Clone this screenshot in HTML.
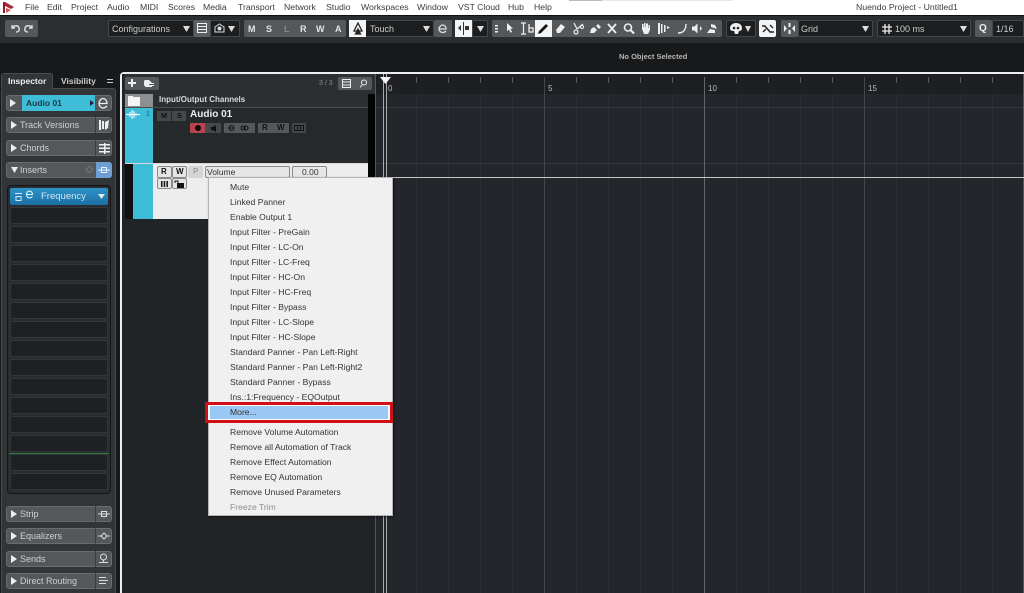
<!DOCTYPE html>
<html><head><meta charset="utf-8"><style>
html,body{margin:0;padding:0;background:#212427}
#r{position:relative;width:1024px;height:593px;overflow:hidden;background:#212427;font-family:"Liberation Sans",sans-serif;font-size:9px;color:#ccc}
#r div,#r svg{position:absolute}
.t{white-space:nowrap;line-height:12px}
.b{background:#55585b;border-radius:2px}
.g{background:#1c1e20;border:1px solid #45484b;border-radius:2px;box-sizing:border-box}
.p{background:#55585b;border:1px solid #6a6d70;border-radius:3px;box-sizing:border-box;left:6px;width:106px;height:16px}
.s{background:#1e2023;border:1px solid #34373a;border-radius:2px;box-sizing:border-box;left:10px;width:98px;height:17px}
.mi{left:230px;color:#333;white-space:nowrap;line-height:12px;font-size:8.6px}
.m{top:1px;color:#3c3c3c;white-space:nowrap;line-height:12px;font-size:8.7px}
.lb{background:#e6e6e6;border:1px solid #8a8a8a;border-radius:2px;box-sizing:border-box}
.sep{left:95px;width:1px;height:16px;background:#3a3d40}
</style></head><body><div id="r">

<div style="left:0;top:0;width:1024px;height:15px;background:#fff"></div>
<svg style="left:2px;top:1px" width="14" height="13" viewBox="0 0 14 13"><path d="M1 1h2v11H1z" fill="#8c1c2c"/><path d="M3 1l9 5-3 2-6-3z" fill="#a52a3a"/><path d="M4 7l5 2-5 3z" fill="#c55"/></svg>
<div class="m" style="left:25px">File</div><div class="m" style="left:47px">Edit</div><div class="m" style="left:71px">Project</div><div class="m" style="left:107px">Audio</div><div class="m" style="left:140px">MIDI</div><div class="m" style="left:168px">Scores</div><div class="m" style="left:203px">Media</div><div class="m" style="left:238px">Transport</div><div class="m" style="left:284px">Network</div><div class="m" style="left:326px">Studio</div><div class="m" style="left:361px">Workspaces</div><div class="m" style="left:417px">Window</div><div class="m" style="left:458px">VST Cloud</div><div class="m" style="left:508px">Hub</div><div class="m" style="left:534px">Help</div>
<div class="m" style="left:856px">Nuendo Project - Untitled1</div>
<div style="left:569px;top:0;width:33px;height:1px;background:#bbb"></div>
<div style="left:602px;top:0;width:131px;height:1px;background:#e8e8e8"></div>

<!-- toolbar -->
<div style="left:0;top:15px;width:1024px;height:1px;background:#111"></div>
<div style="left:0;top:16px;width:1024px;height:27px;background:#2b2e31"></div>
<div style="left:0;top:43px;width:1024px;height:50px;background:#17191b"></div>
<div class="t" style="left:619px;top:51px;font-size:7.5px;color:#b5b5b5;font-weight:bold">No Object Selected</div>

<div class="b" style="left:5px;top:20px;width:33px;height:17px"></div>
<svg style="left:8px;top:22px" width="28" height="13" viewBox="0 0 28 13" fill="none" stroke="#ddd" stroke-width="1.4"><path d="M4 3v3h3M4 6c2-3 6-3 7 0s-1 4-3 4"/><path d="M24 3v3h-3M24 6c-2-3-6-3-7 0s1 4 3 4"/></svg>

<div class="g" style="left:108px;top:20px;width:86px;height:17px"></div>
<div class="t" style="left:112px;top:23px;color:#ccc;font-size:9px">Configurations</div>
<svg style="left:183px;top:26px" width="7" height="6"><path d="M0 0h7L3.5 6z" fill="#ddd"/></svg>
<div style="left:194px;top:20px;width:16px;height:17px;background:#5c5f62"></div>
<svg style="left:197px;top:23px" width="10" height="10" fill="none" stroke="#eee"><rect x=".5" y=".5" width="9" height="9"/><path d="M1 3.5h8M1 6.500h8"/></svg>
<div class="g" style="left:210px;top:20px;width:30px;height:17px"></div>
<svg style="left:214px;top:23px" width="11" height="10" fill="none" stroke="#ddd"><path d="M1 4l4.500-3 4.500 3v5H1z"/><circle cx="5.500" cy="5.500" r="1.500" fill="#ddd"/></svg>
<svg style="left:228px;top:26px" width="7" height="6"><path d="M0 0h7L3.500 6z" fill="#ddd"/></svg>

<div class="b" style="left:244px;top:20px;width:102px;height:17px"></div>
<div class="t" style="left:248px;top:23px;font-weight:bold;color:#e4e4e4">M</div>
<div class="t" style="left:266px;top:23px;font-weight:bold;color:#e4e4e4">S</div>
<div class="t" style="left:284px;top:23px;font-weight:bold;color:#85888a">L</div>
<div class="t" style="left:300px;top:23px;font-weight:bold;color:#e4e4e4">R</div>
<div class="t" style="left:316px;top:23px;font-weight:bold;color:#e4e4e4">W</div>
<div class="t" style="left:335px;top:23px;font-weight:bold;color:#e4e4e4">A</div>

<div class="g" style="left:349px;top:20px;width:85px;height:17px"></div>
<div style="left:349px;top:20px;width:17px;height:17px;background:#f4f4f4"></div>
<svg style="left:352px;top:22px" width="12" height="13" fill="none" stroke="#222" stroke-width="1.300"><path d="M6 1l4 8H2z"/><path d="M6 7l2.500 5h-5z" fill="#222"/></svg>
<div class="t" style="left:370px;top:23px">Touch</div>
<svg style="left:423px;top:26px" width="7" height="6"><path d="M0 0h7L3.500 6z" fill="#ddd"/></svg>
<div class="b" style="left:434px;top:20px;width:18px;height:17px"></div>
<svg style="left:437px;top:23px" width="11" height="11" fill="none" stroke="#ddd" stroke-width="1.300"><path d="M2 6h7c0-3-2-4-3.500-4S2 4 2 6s2 3.500 3.500 3.500S8 9 9 8"/></svg>
<div style="left:455px;top:20px;width:17px;height:17px;background:#f4f4f4"></div>
<svg style="left:457px;top:22px" width="14" height="13"><path d="M6 0h1v13H6zM1 6l3-3v6zM8 4h4v4H8z" fill="#333"/></svg>
<div class="g" style="left:472px;top:20px;width:16px;height:17px"></div>
<svg style="left:477px;top:26px" width="7" height="6"><path d="M0 0h7L3.500 6z" fill="#ddd"/></svg>

<!-- tool group -->
<div class="b" style="left:492px;top:20px;width:230px;height:17px"></div>
<div style="left:535px;top:20px;width:17px;height:17px;background:#f4f4f4"></div>
<svg style="left:492px;top:20px" width="230" height="17" fill="#eee">
<path d="M3 5h3v1.500H3zM3 8h3v1.500H3zM3 11h3v1.500H3z"/>
<path d="M15 3l6 5.500-2.500.3 1.500 3.200-1.500.7-1.500-3.200-2 1.800z"/>
<path d="M29 3h5M31.500 3v11M29 14h5" stroke="#eee" stroke-width="1.200" fill="none"/><path d="M37 4v8h4V8h-4" stroke="#eee" stroke-width="1.300" fill="none"/>
<path d="M46 14l1-3 7-7 2 2-7 7z" fill="#111"/>
<path d="M64 10l5-6 4 3-5 6h-3z"/>
<path d="M82 3l3 6M91 4l-6 5" stroke="#eee" stroke-width="1.200" fill="none"/><circle cx="84" cy="12" r="2" fill="none" stroke="#eee" stroke-width="1.200"/><circle cx="90" cy="7" r="1.500" fill="none" stroke="#eee"/>
<path d="M98 13l1-4 3-2 3 3-3 3zM104 6l2-2 3 3-2 2z"/>
<path d="M116 4l8 9M124 4l-8 9" stroke="#eee" stroke-width="1.800" fill="none"/>
<circle cx="136" cy="7.500" r="3.500" fill="none" stroke="#eee" stroke-width="1.600"/><path d="M138.500 10l3.500 3.500" stroke="#eee" stroke-width="2"/>
<path d="M150 9V4h1.500v3h.5V3h1.500v4h.5V3.500H156V8h.5V5h1.500v5l-2 4h-4z"/>
<path d="M166 3h2v11h-2zM169 4h1.500v9H169zM172 5h1.500v7H172zM175 6l3 1.500-3 1.500z"/>
<path d="M194 4c0 6-3 9-8 9" fill="none" stroke="#eee" stroke-width="1.400"/>
<path d="M200 6.500h2.500l3-3v10l-3-3H200zM208 6l2 2.500-2 2.500z"/>
<path d="M215 13l3-4 5 1v3zM219 4l4 1 2 4-3-1-3-1z"/>
</svg>

<div class="g" style="left:726px;top:20px;width:30px;height:17px"></div>
<svg style="left:729px;top:22px" width="14" height="14"><path d="M7 1c3.500 0 6 2 6 5 0 2-1 3-3 3l-1 3H6L5 9C2 9 1 8 1 6c0-3 3-5 6-5z" fill="#eee"/><circle cx="5" cy="6" r="1.300" fill="#222"/><circle cx="9" cy="6" r="1.300" fill="#222"/></svg>
<svg style="left:745px;top:26px" width="7" height="6"><path d="M0 0h6L3 6z" fill="#ddd"/></svg>
<div style="left:759px;top:20px;width:17px;height:17px;background:#f4f4f4;border-radius:2px"></div>
<svg style="left:761px;top:22px" width="14" height="13" fill="none" stroke="#222" stroke-width="1.400"><path d="M1 4h3l5 6h4"/><path d="M2 10l3-3M9 3l3 3"/></svg>
<div class="b" style="left:781px;top:20px;width:17px;height:17px"></div>
<svg style="left:783px;top:22px" width="13" height="13" fill="#eee"><path d="M5.500 1h2v4h-2zM5.500 8h2v4h-2zM1 3l3 3.500-3 3.500zM12 3L9 6.500l3 3.500z"/></svg>
<div class="g" style="left:798px;top:20px;width:75px;height:17px"></div>
<div class="t" style="left:801px;top:23px">Grid</div>
<svg style="left:862px;top:26px" width="7" height="6"><path d="M0 0h7L3.500 6z" fill="#ddd"/></svg>
<div class="g" style="left:877px;top:20px;width:94px;height:17px"></div>
<svg style="left:882px;top:24px" width="10" height="10" stroke="#eee" stroke-width="1.300"><path d="M3 0v10M7 0v10M0 3h10M0 7h10"/></svg>
<div class="t" style="left:895px;top:23px">100 ms</div>
<svg style="left:960px;top:26px" width="7" height="6"><path d="M0 0h7L3.500 6z" fill="#ddd"/></svg>
<div class="b" style="left:975px;top:20px;width:17px;height:17px"></div>
<div class="t" style="left:979px;top:23px;font-weight:bold;color:#eee;font-size:10px">Q</div>
<div class="g" style="left:992px;top:20px;width:32px;height:17px"></div>
<div class="t" style="left:996px;top:23px">1/16</div>

<!-- inspector panel -->
<div style="left:0;top:72px;width:121px;height:521px;background:#17191b"></div>
<div style="left:1px;top:88px;width:115px;height:505px;background:#323538;border:1px solid #4a4d50;border-bottom:none;border-radius:3px 3px 0 0;box-sizing:border-box"></div>
<div style="left:1px;top:73px;width:52px;height:16px;background:#323538;border-radius:3px 3px 0 0;border:1px solid #4a4d50;border-bottom:none;box-sizing:border-box"></div>
<div class="t" style="left:8px;top:75px;font-weight:bold;color:#eee;font-size:8.500px">Inspector</div>
<div class="t" style="left:61px;top:75px;font-weight:bold;color:#ccc;font-size:8.500px">Visibility</div>
<div style="left:107px;top:79px;width:6px;height:1px;background:#ccc"></div>
<div style="left:107px;top:82px;width:6px;height:1px;background:#ccc"></div>

<div class="p" style="top:95px"></div>
<div style="left:22px;top:95px;width:73px;height:16px;background:#3fbcd8"></div>
<svg style="left:10px;top:99px" width="6" height="8"><path d="M0 0l6 4-6 4z" fill="#eee"/></svg>
<div class="t" style="left:26px;top:97px;font-weight:bold;color:#1c3844;font-size:8.500px">Audio 01</div>
<svg style="left:90px;top:100px" width="4" height="6"><path d="M0 0l4 3-4 3z" fill="#223"/></svg>
<svg style="left:97px;top:97px" width="12" height="12" fill="none" stroke="#eee" stroke-width="1.300"><path d="M2 6.500h8c0-3-2-5-4-5S2 4 2 6.500 4 11 6 11s3-1 4-2"/></svg>

<div class="p" style="top:117px"></div>
<svg style="left:11px;top:121px" width="6" height="8"><path d="M0 0l6 4-6 4z" fill="#eee"/></svg>
<div class="t" style="left:20px;top:119px;color:#d0d0d0">Track Versions</div>
<div class="sep" style="top:117px"></div>
<svg style="left:98px;top:119px" width="12" height="12" fill="#eee"><path d="M1 1h2v10H1zM4 2h2v8H4zM7 3l4-2-1 8-3 2z"/></svg>

<div class="p" style="top:140px"></div>
<svg style="left:11px;top:144px" width="6" height="8"><path d="M0 0l6 4-6 4z" fill="#eee"/></svg>
<div class="t" style="left:20px;top:142px;color:#d0d0d0">Chords</div>
<div class="sep" style="top:140px"></div>
<svg style="left:99px;top:143px" width="11" height="11" fill="#eee"><path d="M0 1h11v1.500H0zM0 4.500h11V6H0zM0 8h11v1.500H0zM5 0h1.500v11H5z"/></svg>

<div class="p" style="top:162px"></div>
<svg style="left:11px;top:167px" width="7" height="6"><path d="M0 0h7L3.500 6z" fill="#eee"/></svg>
<div class="t" style="left:20px;top:164px;color:#d0d0d0">Inserts</div>
<svg style="left:85px;top:165px" width="9" height="9" fill="none" stroke="#777"><path d="M4.500 1l3.500 3.500-3.500 3.500L1 4.500z"/></svg>
<div style="left:96px;top:162px;width:16px;height:16px;background:#6d9ed4;border-radius:0 3px 3px 0"></div>
<svg style="left:98px;top:165px" width="12" height="10" fill="none" stroke="#e8f0ff"><rect x="3.500" y="2.500" width="5" height="5"/><path d="M0 5h12"/></svg>

<div style="left:7px;top:185px;width:104px;height:309px;background:#2a2d30;border:1px solid #141618;border-radius:4px;box-sizing:border-box"></div>
<div style="left:10px;top:188px;width:98px;height:17px;background:linear-gradient(#2e93c8,#1d6fa3);border-radius:2px"></div>
<svg style="left:13px;top:191px" width="16" height="11" fill="none" stroke="#cfe7f5"><path d="M2 2.500h7M3 5.500h5v4H3z"/></svg>
<svg style="left:25px;top:190px" width="9" height="9" fill="none" stroke="#dff"><path d="M1.500 4.500h6c0-2-1.500-3.500-3-3.500S1.500 2.500 1.500 4.500 3 8 4.500 8 7 7 7.500 6.500"/></svg>
<div class="t" style="left:41px;top:191px;color:#cfe7f5;font-size:9.500px">Frequency</div>
<svg style="left:98px;top:194px" width="7" height="5"><path d="M0 0h7L3.500 5z" fill="#dbeaf5"/></svg>

<div class="s" style="top:207px"></div><div class="s" style="top:226px"></div><div class="s" style="top:245px"></div><div class="s" style="top:264px"></div><div class="s" style="top:283px"></div><div class="s" style="top:302px"></div><div class="s" style="top:321px"></div><div class="s" style="top:340px"></div><div class="s" style="top:359px"></div><div class="s" style="top:378px"></div><div class="s" style="top:397px"></div><div class="s" style="top:416px"></div><div class="s" style="top:435px"></div><div class="s" style="top:454px"></div><div class="s" style="top:473px"></div>
<div style="left:9px;top:453px;width:100px;height:1px;background:#2f7a38"></div>

<div class="p" style="top:506px"></div>
<svg style="left:11px;top:510px" width="6" height="8"><path d="M0 0l6 4-6 4z" fill="#eee"/></svg>
<div class="t" style="left:20px;top:508px;color:#d0d0d0">Strip</div>
<div class="sep" style="top:506px"></div>
<svg style="left:98px;top:509px" width="12" height="10" fill="none" stroke="#ddd"><rect x="3.500" y="2.500" width="5" height="5"/><path d="M0 5h12"/></svg>

<div class="p" style="top:528px"></div>
<svg style="left:11px;top:532px" width="6" height="8"><path d="M0 0l6 4-6 4z" fill="#eee"/></svg>
<div class="t" style="left:20px;top:530px;color:#d0d0d0">Equalizers</div>
<div class="sep" style="top:528px"></div>
<svg style="left:98px;top:531px" width="12" height="10" fill="none" stroke="#ddd"><path d="M6 2l3 3-3 3-3-3zM0 5h3M9 5h3"/></svg>

<div class="p" style="top:551px"></div>
<svg style="left:11px;top:555px" width="6" height="8"><path d="M0 0l6 4-6 4z" fill="#eee"/></svg>
<div class="t" style="left:20px;top:553px;color:#d0d0d0">Sends</div>
<div class="sep" style="top:551px"></div>
<svg style="left:98px;top:553px" width="11" height="11" fill="none" stroke="#ddd"><circle cx="5.500" cy="4" r="3"/><path d="M1 9.500h9M5.500 7v2"/></svg>

<div class="p" style="top:573px"></div>
<svg style="left:11px;top:577px" width="6" height="8"><path d="M0 0l6 4-6 4z" fill="#eee"/></svg>
<div class="t" style="left:20px;top:575px;color:#d0d0d0">Direct Routing</div>
<div class="sep" style="top:573px"></div>
<svg style="left:99px;top:576px" width="11" height="10" stroke="#ddd"><path d="M0 1.500h7M0 4.500h9M0 7.500h7"/></svg>

<!-- project frame -->
<div style="left:120px;top:72px;width:904px;height:521px;background:#212427;border-top:2px solid #eee;border-left:2px solid #eee;border-radius:4px 0 0 0;box-sizing:border-box"></div>

<!-- track list -->
<div style="left:122px;top:74px;width:2px;height:519px;background:#212427"></div>
<div style="left:124px;top:74px;width:251px;height:20px;background:#2c2f32"></div>
<div class="b" style="left:125px;top:77px;width:34px;height:13px"></div>
<svg style="left:128px;top:79px" width="28" height="9"><path d="M3 0h2v3h3v2H5v3H3V5H0V3h3z" fill="#eee"/><path d="M17 1h4l3 3h-3v3h3v1h-5c-2 0-3-1-3-3s0-4 1-4z" fill="#eee"/><path d="M21 4h5v1h-5zM21 6h5v1h-5z" fill="#eee"/></svg>
<div class="t" style="left:319px;top:78px;font-size:7px;color:#888">3 / 3</div>
<div class="b" style="left:338px;top:77px;width:34px;height:13px"></div>
<svg style="left:342px;top:79px" width="28" height="9" fill="none" stroke="#eee"><rect x=".5" y=".5" width="8" height="8"/><path d="M1 3h7M1 6h7"/><circle cx="22" cy="3.500" r="2.500"/><path d="M20 6l-2 2.500"/></svg>

<div style="left:125px;top:94px;width:28px;height:13px;background:#8d8f91"></div>
<svg style="left:128px;top:95px" width="12" height="11"><path d="M0 1h5v1h7v9H0z" fill="#f4f4f4"/></svg>
<div style="left:153px;top:94px;width:215px;height:13px;background:#2c2f32"></div>
<div class="t" style="left:159px;top:94px;font-weight:bold;color:#d8d8d8;font-size:8px">Input/Output Channels</div>
<div style="left:368px;top:94px;width:7px;height:125px;background:#050505"></div>

<div style="left:125px;top:107px;width:28px;height:56px;background:#3fbcd8"></div>
<div style="left:153px;top:107px;width:215px;height:56px;background:#26292c"></div>
<div style="left:125px;top:107px;width:243px;height:1px;background:#4a4d50"></div>
<svg style="left:126px;top:109px" width="14" height="11" stroke="#fff"><path d="M0 5.500h14M4 3v5M6 1v9M8 2v7M10 4v3"/></svg>
<div class="t" style="left:146px;top:109px;font-size:7px;color:#1a5c70">1</div>
<div style="left:157px;top:111px;width:14px;height:10px;background:#45484a"></div>
<div style="left:172px;top:111px;width:14px;height:10px;background:#45484a"></div>
<div class="t" style="left:161px;top:110px;font-size:7.500px;font-weight:bold;color:#111">M</div>
<div class="t" style="left:177px;top:110px;font-size:7.500px;font-weight:bold;color:#111">S</div>
<div class="t" style="left:190px;top:109px;font-size:10px;font-weight:bold;color:#eee">Audio 01</div>
<div style="left:190px;top:123px;width:15px;height:10px;background:#b8434c;border-radius:1px"></div>
<div style="left:195px;top:125px;width:6px;height:6px;background:#140808;border-radius:50%"></div>
<div style="left:205px;top:123px;width:16px;height:10px;background:#45484a"></div>
<svg style="left:211px;top:125px" width="7" height="7"><path d="M0 2h2l3-2v7L2 5H0z" fill="#111"/></svg>
<div style="left:224px;top:123px;width:31px;height:10px;background:#55585a;border-radius:1px"></div>
<svg style="left:228px;top:124px" width="24" height="8" fill="none" stroke="#111"><circle cx="3.500" cy="4" r="2.500"/><path d="M1 4h5"/><circle cx="15" cy="4" r="2"/><circle cx="18" cy="4" r="2"/></svg>
<div style="left:258px;top:123px;width:31px;height:10px;background:#55585a;border-radius:1px"></div>
<div class="t" style="left:262px;top:122px;font-size:8px;font-weight:bold;color:#111">R</div>
<div class="t" style="left:277px;top:122px;font-size:8px;font-weight:bold;color:#111">W</div>
<div style="left:292px;top:123px;width:14px;height:10px;background:#45484a;border-radius:1px"></div>
<svg style="left:294px;top:125px" width="10" height="6" fill="none" stroke="#111"><rect x=".5" y=".5" width="9" height="5"/><path d="M3.500 0v6M6.500 0v6"/></svg>

<!-- automation lane -->
<div style="left:125px;top:163px;width:8px;height:56px;background:#111"></div>
<div style="left:133px;top:163px;width:20px;height:56px;background:#3fbcd8"></div>
<div style="left:153px;top:163px;width:215px;height:56px;background:#ededed"></div>
<div class="lb" style="left:157px;top:166px;width:15px;height:12px"></div>
<div class="lb" style="left:172px;top:166px;width:15px;height:12px"></div>
<div class="t" style="left:161px;top:166px;font-size:8px;font-weight:bold;color:#111">R</div>
<div class="t" style="left:176px;top:166px;font-size:8px;font-weight:bold;color:#111">W</div>
<div style="left:188px;top:166px;width:15px;height:12px;background:#d5d5d5;border-radius:2px"></div>
<div class="t" style="left:193px;top:166px;font-size:8px;color:#888">P</div>
<div class="lb" style="left:205px;top:166px;width:85px;height:12px"></div>
<div class="t" style="left:207px;top:166px;color:#333;font-size:8.500px">Volume</div>
<div class="lb" style="left:292px;top:166px;width:35px;height:12px"></div>
<div class="t" style="left:302px;top:166px;color:#333;font-size:8.500px">0.00</div>
<div class="lb" style="left:157px;top:178px;width:15px;height:11px"></div>
<div class="lb" style="left:172px;top:178px;width:15px;height:11px"></div>
<svg style="left:161px;top:181px" width="7" height="6" fill="#111"><path d="M0 0h1.500v6H0zM2.700 0h1.500v6H2.700zM5.400 0h1.500v6H5.400z"/></svg>
<svg style="left:174px;top:180px" width="10" height="8" fill="#111"><path d="M3 3h7v5H3z"/><path d="M1 3V1h3v2" fill="none" stroke="#111"/></svg>
<div style="left:125px;top:163px;width:243px;height:1px;background:#d8d8d8"></div>

<!-- ruler & grid -->
<div style="left:375px;top:74px;width:649px;height:20px;background:#1d1f22"></div>
<div style="left:375px;top:94px;width:649px;height:499px;background:#23262a"></div>
<svg style="left:375px;top:74px" width="649" height="519" fill="none" stroke="#2c2f33">
<path d="M41.500 20V519M73.500 20V519M105.500 20V519M137.500 20V519M201.500 20V519M233.500 20V519M265.500 20V519M297.500 20V519M361.500 20V519M393.500 20V519M425.500 20V519M457.500 20V519M521.500 20V519M553.500 20V519M585.500 20V519M617.500 20V519"/>
<path d="M0 33.500H649M0 89.500H649" stroke="#34373b"/>
<path d="M41.500 3V9M73.500 3V9M105.500 3V9M137.500 3V9M201.500 3V9M233.500 3V9M265.500 3V9M297.500 3V9M361.500 3V9M393.500 3V9M425.500 3V9M457.500 3V9M521.500 3V9M553.500 3V9M585.500 3V9M617.500 3V9" stroke="#55585b"/>
<path d="M169.500 3V519" stroke="#44474a"/><path d="M329.500 3V519" stroke="#62656a"/><path d="M489.500 3V519" stroke="#44474a"/><path d="M648.500 0V519" stroke="#55585b"/>
<path d="M.500 0V519" stroke="#55585b"/><path d="M8.500 0V519M11.500 0V519" stroke="#a8a8a8"/>
</svg>
<svg style="left:380px;top:77px" width="11" height="7"><path d="M0 0h11L5.500 7z" fill="#f4f4f4"/></svg>
<div class="t" style="left:388px;top:83px;font-size:8px;color:#bbb">0</div>
<div class="t" style="left:548px;top:83px;font-size:8px;color:#bbb">5</div>
<div class="t" style="left:708px;top:83px;font-size:8px;color:#bbb">10</div>
<div class="t" style="left:868px;top:83px;font-size:8px;color:#bbb">15</div>
<div style="left:375px;top:177px;width:649px;height:1px;background:#c5c5c5"></div>

<!-- context menu -->
<div style="left:208px;top:177px;width:185px;height:339px;background:#f0f0f0;box-shadow:1px 1px 2px rgba(0,0,0,.5);border:1px solid #b4b4b4;box-sizing:border-box"></div>
<div style="left:205px;top:402px;width:182px;height:15px;border:3px solid #d01016;box-sizing:content-box;background:#fafafa"></div>
<div style="left:210px;top:406px;width:178px;height:13px;background:#99c8f5"></div>

<div class="mi" style="top:181px">Mute</div>
<div class="mi" style="top:196px">Linked Panner</div>
<div class="mi" style="top:211px">Enable Output 1</div>
<div class="mi" style="top:226px">Input Filter - PreGain</div>
<div class="mi" style="top:241px">Input Filter - LC-On</div>
<div class="mi" style="top:256px">Input Filter - LC-Freq</div>
<div class="mi" style="top:271px">Input Filter - HC-On</div>
<div class="mi" style="top:286px">Input Filter - HC-Freq</div>
<div class="mi" style="top:301px">Input Filter - Bypass</div>
<div class="mi" style="top:316px">Input Filter - LC-Slope</div>
<div class="mi" style="top:331px">Input Filter - HC-Slope</div>
<div class="mi" style="top:346px">Standard Panner - Pan Left-Right</div>
<div class="mi" style="top:361px">Standard Panner - Pan Left-Right2</div>
<div class="mi" style="top:376px">Standard Panner - Bypass</div>
<div class="mi" style="top:391px">Ins.:1:Frequency - EQOutput</div>
<div class="mi" style="top:406px">More...</div>
<div class="mi" style="top:426px">Remove Volume Automation</div>
<div class="mi" style="top:441px">Remove all Automation of Track</div>
<div class="mi" style="top:456px">Remove Effect Automation</div>
<div class="mi" style="top:471px">Remove EQ Automation</div>
<div class="mi" style="top:486px">Remove Unused Parameters</div>
<div class="mi" style="top:501px;color:#8c8c8c">Freeze Trim</div>
</div></body></html>
